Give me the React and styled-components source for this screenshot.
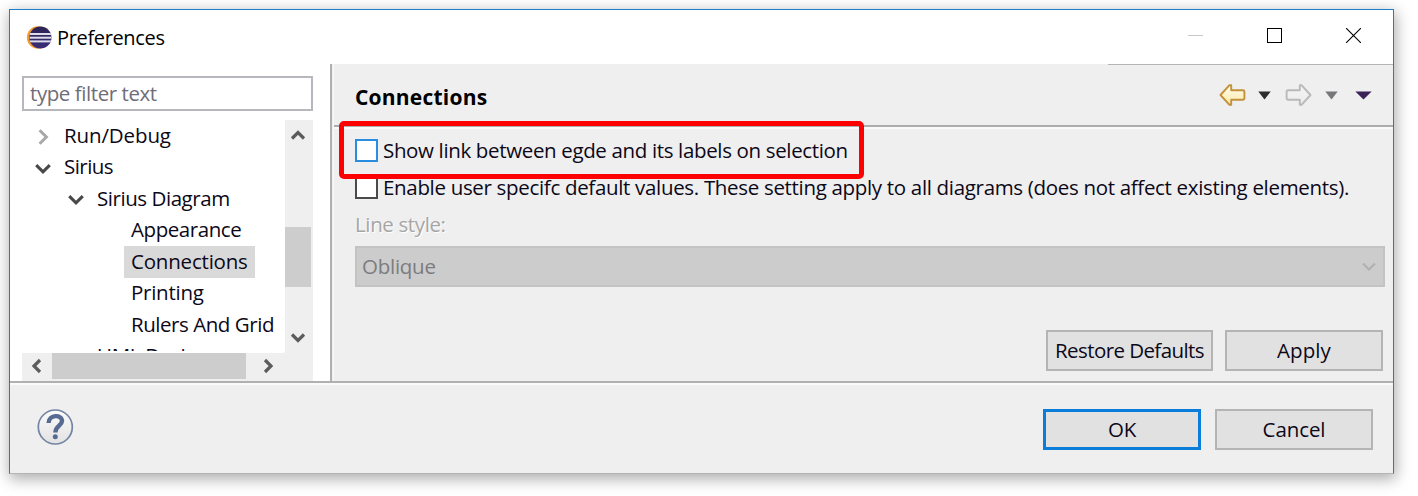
import React from 'react';
import styled, { createGlobalStyle } from 'styled-components';

const Global = createGlobalStyle`
  * { box-sizing: border-box; }
  body { margin: 0; background: #fff; overflow: hidden; }
`;

const Desktop = styled.div`
  width: 1418px;
  height: 496px;
  padding: 9px;
  overflow: hidden;
  background: #fff;
  font-family: "Open Sans", "Noto Sans", sans-serif;
  color: #0c0818;
`;

const Window = styled.div`
  width: 1385px;
  height: 465px;
  display: flex;
  flex-direction: column;
  background: #efefef;
  border: 1px solid #1a7fcd;
  border-bottom-color: #b4b4b4;
  box-shadow: 1px 4px 14px 1px rgba(0, 0, 0, 0.33);
`;

const Label = styled.span`
  display: inline-block;
  white-space: pre;
  line-height: 28px;
  padding-bottom: ${p => (p.$flush ? 0 : 2)}px;
  letter-spacing: ${p => p.$ls || 0}px;
  font-size: ${p => p.$size || 20.5}px;
  font-weight: ${p => p.$weight || 400};
  color: ${p => p.$color || 'inherit'};
`;

const TitleBar = styled.div`
  flex: none;
  height: 54px;
  display: flex;
  align-items: center;
  justify-content: space-between;
  padding: 1px 32px 0 16px;
  background: #fff;
`;

const TitleLeft = styled.div`
  display: flex;
  align-items: center;
  gap: 5px;
`;

const WindowControls = styled.div`
  display: flex;
  gap: 64px;
  padding-bottom: 4px;
`;

const Main = styled.div`
  flex: none;
  height: 317px;
  display: flex;
`;

const Sidebar = styled.div`
  width: 320px;
  padding: 12px 0 0 12px;
  background: #fff;
`;

const Filter = styled.div`
  width: 291px;
  height: 35px;
  display: flex;
  align-items: center;
  padding-left: 6px;
  border: 2px solid #b6b8bd;
`;

const TreeArea = styled.div`
  width: 291px;
  height: 261px;
  margin-top: 9px;
  display: flex;
  background: #efefef;
`;

const TreeColumn = styled.div`
  width: 263px;
`;

const Tree = styled.div`
  height: 233px;
  overflow: hidden;
  background: #fff;
  border-bottom: 2px solid #fff;
  border-bottom-right-radius: 2px;
`;

const TreeRow = styled.div`
  height: 31.5px;
  display: flex;
  align-items: center;
  padding-left: ${p => p.$indent}px;
`;

const Twisty = styled.span`
  width: 30px;
  display: flex;
  align-items: center;
  padding-top: 3px;
`;

const NodeName = styled.span`
  height: 31.5px;
  display: flex;
  align-items: center;
  padding: 0 7px;
  margin-left: -7px;
  background: ${p => (p.$selected ? '#d9d9d9' : 'transparent')};
`;

const VScroll = styled.div`
  width: 28px;
  display: flex;
  flex-direction: column;
`;

const HScroll = styled.div`
  height: 28px;
  display: flex;
`;

const ArrowV = styled.div`
  flex: none;
  width: 26px;
  height: ${p => p.$h}px;
  display: flex;
  justify-content: center;
  align-items: center;
`;

const ArrowH = styled.div`
  flex: none;
  width: ${p => p.$w}px;
  height: 26px;
  display: flex;
  justify-content: center;
  align-items: center;
`;

const ThumbV = styled.div`
  flex: none;
  width: 26px;
  height: 60px;
  margin-top: 76px;
  background: #cdcdcd;
`;

const ThumbH = styled.div`
  flex: none;
  width: 194px;
  height: 26px;
  background: #cdcdcd;
`;

const Sash = styled.div`
  width: 4px;
  background: #efefef;
  border-left: 2px solid #b0b0b0;
  border-right: 1px solid #f8f8f8;
`;

const Page = styled.div`
  flex: 1;
  display: flex;
  flex-direction: column;
`;

const TopRule = styled.div`
  height: 1px;
  width: 285px;
  align-self: flex-end;
  background: #b4b4b4;
`;

const PageHeader = styled.div`
  height: 62px;
  display: flex;
  align-items: center;
  justify-content: space-between;
  padding: 5px 21px 0 21px;
  border-bottom: 2px solid #adadad;
`;

const NavTools = styled.div`
  display: flex;
  align-items: center;
  padding-bottom: 5px;
`;

const PageBody = styled.div`
  flex: 1;
  display: flex;
  flex-direction: column;
  padding: 3px 0 0 21px;
  border-top: 2px solid #fafafa;
`;

const OptionRow = styled.div`
  position: relative;
  height: 37px;
  display: flex;
  align-items: center;
  gap: 5px;
`;

const CheckBox = styled.span`
  width: 23px;
  height: 23px;
  background: #fff;
  border: 2px solid ${p => (p.$focus ? '#2a8de0' : '#4a4a4a')};
`;

const Highlight = styled.div`
  position: absolute;
  left: -16px;
  top: -11px;
  width: 525px;
  height: 58px;
  border: 5px solid #fe0000;
  border-radius: 5px;
  z-index: 1;
`;

const FieldName = styled.div`
  height: 37px;
  margin-bottom: 3px;
  display: flex;
  align-items: center;
  text-shadow: 1px 1px 0 #fff;
`;

const Combo = styled.div`
  width: 1030px;
  height: 41px;
  display: flex;
  align-items: center;
  justify-content: space-between;
  padding: 0 6px 0 5px;
  background: #cccccc;
  border: 2px solid #c3c3c3;
`;

const ButtonRow = styled.div`
  display: flex;
  justify-content: flex-end;
  gap: ${p => p.$gap}px;
  padding-right: ${p => p.$right}px;
  margin-top: ${p => p.$top || 0}px;
`;

const Button = styled.div`
  width: ${p => p.$w || 158}px;
  height: 41px;
  display: flex;
  align-items: center;
  justify-content: center;
  background: #e1e1e1;
  border: ${p => (p.$primary ? '3px solid #0a7cda' : '2px solid #b4b4b4')};
`;

const Footer = styled.div`
  flex: 1;
  display: flex;
  justify-content: space-between;
  align-items: flex-start;
  padding: 26px 20px 0 27px;
  border-top: 2px solid #b0b0b0;
  box-shadow: inset 0 2px 0 #fafafa;
`;

const PATHS = {
  up: 'M2 10.5 L8 4.5 L14 10.5',
  down: 'M2 4.5 L8 10.5 L14 4.5',
  left: 'M11 2 L5 8 L11 14',
  right: 'M5 2 L11 8 L5 14',
};

const Chevron = ({ dir, color = '#5c5c5c', w = 3.2, size = 16 }) => (
  <svg width={size} height={size} viewBox="0 0 16 16">
    <path d={PATHS[dir]} fill="none" stroke={color} strokeWidth={w} />
  </svg>
);

const EclipseLogo = () => (
  <svg width="26" height="24" viewBox="0 0 26 24">
    <defs>
      <linearGradient id="globe" x1="0" y1="0" x2="0" y2="1">
        <stop offset="0" stopColor="#2b2354" />
        <stop offset="1" stopColor="#3a2d78" />
      </linearGradient>
      <clipPath id="disc"><circle cx="14.4" cy="11.5" r="11.1" /></clipPath>
    </defs>
    <circle cx="12.2" cy="11.5" r="11.3" fill="#f59a2c" />
    <circle cx="14.4" cy="11.5" r="11.1" fill="url(#globe)" />
    <g clipPath="url(#disc)" fill="#dedceb">
      <rect x="3.5" y="7" width="23" height="2" />
      <rect x="3.5" y="10.7" width="23" height="2" />
      <rect x="3.5" y="14.4" width="23" height="2" />
    </g>
  </svg>
);

const ArrowIcon = ({ forward }) => (
  <svg width="27" height="24" viewBox="0 0 27 24">
    <defs>
      <linearGradient id={forward ? 'fwd' : 'back'} x1="0" y1="0" x2="0" y2="1">
        <stop offset="0" stopColor={forward ? '#f4f4f4' : '#fffef0'} />
        <stop offset="1" stopColor={forward ? '#ececec' : '#fde9a4'} />
      </linearGradient>
    </defs>
    <path
      d="M1.5 12 L10.5 2.2 H12.2 V7.3 H24 Q25.4 7.3 25.4 8.7 V15.3 Q25.4 16.7 24 16.7 H12.2 V21.8 H10.5 Z"
      transform={forward ? 'translate(27 0) scale(-1 1)' : undefined}
      fill={forward ? 'url(#fwd)' : 'url(#back)'}
      stroke={forward ? '#b9b9b9' : '#c2913a'}
      strokeWidth="1.9"
      strokeLinejoin="round"
    />
  </svg>
);

const Triangle = styled(({ className, color, w }) => (
  <svg className={className} width={w} height="9" viewBox="0 0 14 9" preserveAspectRatio="none">
    <path d="M0.3 0.5 H13.7 L7 8.6 Z" fill={color} />
  </svg>
))`
  margin-left: ${p => p.$ml}px;
  margin-right: ${p => p.$mr || 0}px;
`;

const HelpIcon = () => (
  <svg width="38" height="38" viewBox="0 0 38 38">
    <defs>
      <linearGradient id="help" x1="0" y1="0" x2="0" y2="1">
        <stop offset="0" stopColor="#fbfbfb" />
        <stop offset="1" stopColor="#e2e2e2" />
      </linearGradient>
    </defs>
    <circle cx="18.3" cy="18" r="17" fill="url(#help)" stroke="#7485a3" strokeWidth="1.7" />
    <path d="M11.6 14 C12 5.2 25 5.2 25 12 C25 16.6 18.4 17 18.4 23.4" fill="none" stroke="#566a92" strokeWidth="4.4" />
    <circle cx="18.3" cy="27.8" r="2.5" fill="#566a92" />
  </svg>
);

const NODES = [
  { name: 'Run/Debug', indent: 12, twisty: 'right', ls: -0.12 },
  { name: 'Sirius', indent: 12, twisty: 'down', ls: -0.55 },
  { name: 'Sirius Diagram', indent: 45, twisty: 'down', ls: -0.45 },
  { name: 'Appearance', indent: 109, ls: -0.43 },
  { name: 'Connections', indent: 109, selected: true, ls: -0.2 },
  { name: 'Printing', indent: 109, ls: -0.26 },
  { name: 'Rulers And Grid', indent: 109, ls: -0.45 },
  { name: 'UML Designer', indent: 75, ls: -0.3 },
];

export default function App() {
  return (
    <Desktop>
      <Global />
      <Window>
        <TitleBar>
          <TitleLeft>
            <EclipseLogo />
            <Label $flush $size={20} $ls={-0.35} $color="#000">Preferences</Label>
          </TitleLeft>
          <WindowControls>
            <svg width="15" height="15"><path d="M0 7.5H15" stroke="#c8c8c8" /></svg>
            <svg width="15" height="15"><rect x="0.5" y="0.5" width="14" height="14" fill="none" stroke="#000" /></svg>
            <svg width="15" height="15"><path d="M0 0L15 15M15 0L0 15" stroke="#000" strokeWidth="1.1" /></svg>
          </WindowControls>
        </TitleBar>
        <Main>
          <Sidebar>
            <Filter><Label $ls={-0.43} $color="#6f6d78">type filter text</Label></Filter>
            <TreeArea>
              <TreeColumn>
                <Tree>
                  {NODES.map(n => (
                    <TreeRow key={n.name} $indent={n.indent}>
                      {n.twisty && (
                        <Twisty>
                          <Chevron dir={n.twisty} color={n.twisty === 'right' ? '#a8a8a8' : '#484848'} w={2.7} size={18} />
                        </Twisty>
                      )}
                      <NodeName $selected={n.selected}><Label $ls={n.ls}>{n.name}</Label></NodeName>
                    </TreeRow>
                  ))}
                </Tree>
                <HScroll>
                  <ArrowH $w={30}><Chevron dir="left" /></ArrowH>
                  <ThumbH />
                  <ArrowH $w={44}><Chevron dir="right" /></ArrowH>
                </HScroll>
              </TreeColumn>
              <VScroll>
                <ArrowV $h={31}><Chevron dir="up" /></ArrowV>
                <ThumbV />
                <ArrowV $h={101}><Chevron dir="down" /></ArrowV>
              </VScroll>
            </TreeArea>
          </Sidebar>
          <Sash />
          <Page>
            <TopRule />
            <PageHeader>
              <Label $weight={700} $size={21} $ls={0.22} $color="#000">Connections</Label>
              <NavTools>
                <ArrowIcon />
                <Triangle color="#2e2c2c" w={13} $ml={12} $mr={14} />
                <ArrowIcon forward />
                <Triangle color="#77777a" w={13} $ml={13} />
                <Triangle color="#3b2358" w={17} $ml={17} />
              </NavTools>
            </PageHeader>
            <PageBody>
              <OptionRow>
                <CheckBox $focus />
                <Label $ls={-0.35}>Show link between egde and its labels on selection</Label>
                <Highlight />
              </OptionRow>
              <OptionRow>
                <CheckBox />
                <Label $ls={-0.32}>Enable user specifc default values. These setting apply to all diagrams (does not affect existing elements).</Label>
              </OptionRow>
              <FieldName><Label $ls={-0.37} $color="#a6a6a6">Line style:</Label></FieldName>
              <Combo>
                <Label $ls={-0.26} $color="#7c7c7e">Oblique</Label>
                <Chevron dir="down" color="#b0b0b0" w={2} />
              </Combo>
              <ButtonRow $right={10} $top={43} $gap={12}>
                <Button $w={167}><Label $ls={-0.59}>Restore Defaults</Label></Button>
                <Button><Label $ls={0.1}>Apply</Label></Button>
              </ButtonRow>
            </PageBody>
          </Page>
        </Main>
        <Footer>
          <HelpIcon />
          <ButtonRow $right={0} $gap={14}>
            <Button $primary><Label $ls={-0.35}>OK</Label></Button>
            <Button><Label $ls={-0.1}>Cancel</Label></Button>
          </ButtonRow>
        </Footer>
      </Window>
    </Desktop>
  );
}
